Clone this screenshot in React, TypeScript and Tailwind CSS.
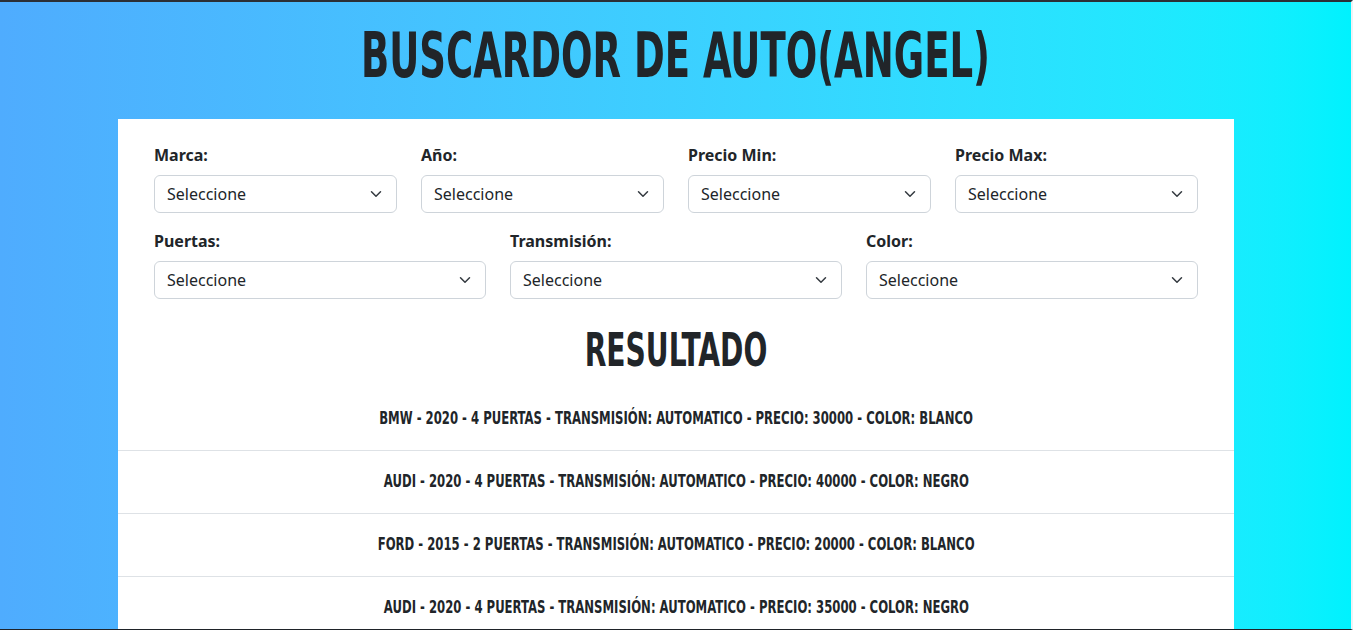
import React from "react";

const cond = { fontFamily: "'DejaVu Sans Condensed','Liberation Sans',sans-serif" };

function Select({ label }: { label: string }) {
  return (
    <div className="flex flex-col">
      <label className="mb-2 text-[16px] font-bold leading-6 text-[#212529]">{label}</label>
      <div className="flex h-[38px] items-center justify-between rounded-[6px] border border-[#ced4da] bg-white pl-3 pr-3 text-[16px] text-[#212529]">
        <span>Seleccione</span>
        <svg width="16" height="12" viewBox="0 0 16 16" fill="none" stroke="#343a40" strokeWidth="2" strokeLinecap="round" strokeLinejoin="round">
          <path d="m2 5 6 6 6-6" />
        </svg>
      </div>
    </div>
  );
}

const results = [
  "BMW - 2020 - 4 Puertas - Transmisión: automatico - Precio: 30000 - Color: Blanco",
  "Audi - 2020 - 4 Puertas - Transmisión: automatico - Precio: 40000 - Color: Negro",
  "Ford - 2015 - 2 Puertas - Transmisión: automatico - Precio: 20000 - Color: Blanco",
  "Audi - 2020 - 4 Puertas - Transmisión: automatico - Precio: 35000 - Color: Negro",
];

export default function App() {
  return (
    <div
      className="h-[630px] w-full overflow-hidden border-t-2 border-b border-r-2 border-t-[#2b2f36] border-b-[#1f2329] border-r-[#eef2f5] bg-gradient-to-r from-[#4facfe] to-[#00f2fe]"
      style={{ fontFamily: "'Noto Sans','Open Sans',sans-serif" }}
    >
      <h1
        className="mt-[19px] mb-[28px] scale-x-[0.664] text-center text-[62px] font-bold uppercase leading-[70px] text-[#212529]"
        style={cond}
      >
        Buscardor de Auto(Angel)
      </h1>
      <div className="ml-[118px] w-[1116px] bg-white">
        <div className="px-9 pt-6">
          <div className="grid grid-cols-4 gap-x-6">
            <Select label="Marca:" />
            <Select label="Año:" />
            <Select label="Precio Min:" />
            <Select label="Precio Max:" />
          </div>
          <div className="mt-4 grid grid-cols-3 gap-x-6">
            <Select label="Puertas:" />
            <Select label="Transmisión:" />
            <Select label="Color:" />
          </div>
        </div>
        <h2
          className="mt-[30px] mb-[16px] scale-x-[0.68] text-center text-[46px] font-bold uppercase leading-[42px] text-[#212529]"
          style={cond}
        >
          Resultado
        </h2>
        <div>
          {results.map((r, i) => (
            <div
              key={i}
              className={`flex h-[63px] items-center justify-center text-[17px] font-bold uppercase text-[#212529] ${i > 0 ? "border-t border-[#dee2e6]" : ""}`}
              style={cond}
            >
              <span className="inline-block scale-x-[0.763] whitespace-nowrap">{r}</span>
            </div>
          ))}
        </div>
      </div>
    </div>
  );
}
